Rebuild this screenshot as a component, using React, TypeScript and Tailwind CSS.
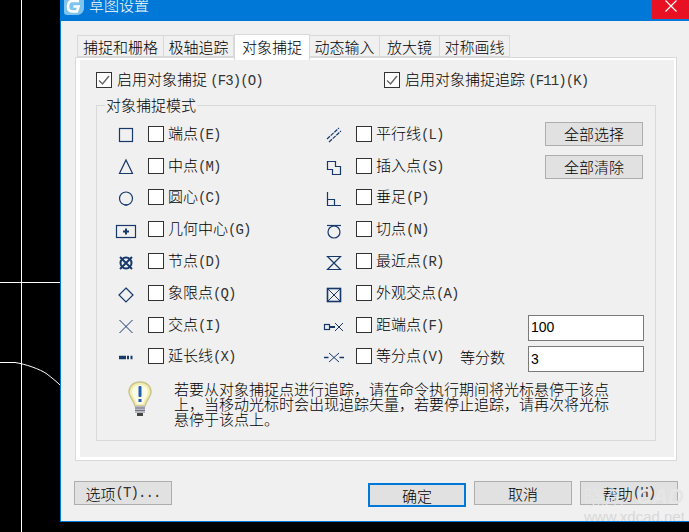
import React from 'react';

const cjk = "font-['Noto_Sans_CJK_SC','Liberation_Sans',sans-serif]";
const ICON = '#16386c';

// half-width latin part of a label, looks like the SimSun latin in the dialog
const Latin: React.FC<{ children: React.ReactNode }> = ({ children }) => (
    <span className="font-['Liberation_Mono',monospace] text-[14px] tracking-[-0.9px] text-[#333333]">{children}</span>
);

const Txt: React.FC<{ text: string }> = ({ text }) => {
    const m = text.match(/^([^(]*)(.*)$/);
    return (
        <span className="whitespace-nowrap">
            {m?.[1]}
            {m?.[2] && <Latin>{m[2]}</Latin>}
        </span>
    );
};

const Check: React.FC<{ checked?: boolean }> = ({ checked }) => (
    <span className="flex h-4 w-4 shrink-0 items-center justify-center border border-[#333333] bg-white">
        {checked && (
            <svg width="14" height="14" viewBox="0 0 14 14" fill="none">
                <path d="M2 7.5 L5.5 11 L12 3" stroke="#666666" strokeWidth="1.4" />
            </svg>
        )}
    </span>
);

const Glyph: React.FC<{ name: string }> = ({ name }) => {
    const shapes: Record<string, React.ReactNode> = {
        end: <rect x="3.5" y="3.5" width="13" height="13" strokeWidth="1.2" />,
        mid: <path d="M10 3 L16.5 16.5 H3.5 Z" strokeWidth="1.2" />,
        center: (
            <>
                <circle cx="10" cy="10.5" r="6.5" strokeWidth="1.2" />
                <path d="M8.5 17 H11.5" strokeWidth="1.4" />
            </>
        ),
        geo: (
            <>
                <rect x="0.5" y="5.5" width="19" height="12" strokeWidth="1.2" />
                <path d="M7 11.5 H13 M10 8.5 V14.5" strokeWidth="2" />
            </>
        ),
        node: (
            <>
                <circle cx="10" cy="11" r="5.5" strokeWidth="2" />
                <path d="M4 5 L16 17 M16 5 L4 17" strokeWidth="2" />
            </>
        ),
        quad: <path d="M10 4 L17 11 L10 18 L3 11 Z" strokeWidth="1.2" />,
        cross: <path d="M3.5 4 L16.5 17 M16.5 4 L3.5 17" />,
        ext: <path d="M3 10.5 H10 M11 10.5 H13 M14.5 10.5 H16.5" strokeWidth="3.5" />,
        par: <path d="M3 14 L15 3 M5 17 L17 6" strokeDasharray="4 1" strokeWidth="1.2" />,
        ins: <path d="M3.5 4.5 H11.5 V9.5 H16.5 V17.5 H8.5 V12.5 H3.5 Z" strokeWidth="1.2" />,
        perp: <path d="M3.5 4 V17.5 H17 M3.5 11.5 H10.5 V17.5" strokeWidth="1.2" />,
        tan: (
            <>
                <path d="M3 5.5 H17" strokeWidth="1.2" />
                <circle cx="10" cy="12" r="6" strokeWidth="1.2" />
            </>
        ),
        near: <path d="M3.5 4.5 H16.5 L3.5 17.5 H16.5 Z" strokeWidth="1.2" />,
        app: (
            <>
                <rect x="3.5" y="4.5" width="13" height="13" strokeWidth="1.6" />
                <path d="M3.5 4.5 L16.5 17.5 M16.5 4.5 L3.5 17.5" />
            </>
        ),
        dist: (
            <>
                <rect x="0.5" y="8.5" width="5" height="5" strokeWidth="1.2" />
                <path d="M5 11 H11" strokeWidth="2" />
                <path d="M11 7 L19 15 M19 7 L11 15" />
            </>
        ),
        div: (
            <>
                <path d="M0 10.5 H4.5 M15.5 10.5 H20" strokeWidth="1.6" />
                <path d="M5 6 L15 15 M15 6 L5 15" />
            </>
        ),
    };
    return (
        <svg width="20" height="20" viewBox="0 -1 20 20" fill="none" stroke={ICON} strokeWidth="1" className="overflow-visible">
            {shapes[name]}
        </svg>
    );
};

const Mode: React.FC<{ icon: string; text: string }> = ({ icon, text }) => (
    <div className="flex items-center">
        <span className="w-5 shrink-0">
            <Glyph name={icon} />
        </span>
        <span className="ml-3 mr-1">
            <Check />
        </span>
        <Txt text={text} />
    </div>
);

const Btn: React.FC<{ children: React.ReactNode; primary?: boolean; className?: string }> = ({ children, primary, className }) => (
    <button
        className={`flex h-6 w-[98px] items-center justify-center bg-[#e1e1e1] text-[15px] leading-none text-black ${
            primary ? 'border-2 border-[#0078d7]' : 'border border-[#adadad]'
        } ${className ?? ''}`}
    >
        {children}
    </button>
);

const tabs = [
    { label: '捕捉和栅格', w: 'w-[87px]' },
    { label: '极轴追踪', w: 'w-[70px]' },
    { label: '对象捕捉', w: 'w-[76px]', active: true },
    { label: '动态输入', w: 'w-[70px]' },
    { label: '放大镜', w: 'w-[60px]' },
    { label: '对称画线', w: 'w-[70px]' },
];

const Bulb = () => (
    <svg width="24" height="35" viewBox="0 0 24 35" className="shrink-0">
        <path d="M12 1 C5 1 1 5.5 1 11 C1 16.5 6 19 7 25 H17 C18 19 23 16.5 23 11 C23 5.5 19 1 12 1 Z" fill="#f3efb4" stroke="#c9c58c" strokeWidth="1.5" />
        <path d="M12 4 C7 4 4 7.5 4 11 C4 15 8 18 9 23 H15 C16 18 20 15 20 11 C20 7.5 17 4 12 4 Z" fill="#fbfbe6" />
        <rect x="10.5" y="5" width="3" height="11" rx="1" fill="#1f5fb5" />
        <rect x="10.5" y="18" width="3" height="3" fill="#1f5fb5" />
        <rect x="7" y="25" width="10" height="7" fill="#b9b9c4" />
        <path d="M7 27 H17 M7 29.5 H17" stroke="#77778a" />
        <rect x="9" y="32" width="6" height="3" fill="#444444" />
    </svg>
);

const AppLogo = () => (
    <svg width="20" height="15" viewBox="0 0 20 15">
        <path d="M3 -3 H20 V8 C20 12 17 15 13 15 H3 C1 15 0 14 0 12 V0 C0 -2 1 -3 3 -3 Z" fill="#7fc4ee" />
        <path d="M15 1 H8 C5 1 4 4 4 7 C4 10 6 11.5 9 11.5 H13 L14.5 6.5 H9.5" fill="none" stroke="#ffffff" strokeWidth="2.6" />
    </svg>
);

export default function App() {
    return (
        <div className={`relative flex h-[532px] w-[689px] items-start overflow-hidden bg-black text-[15px] font-light leading-[15px] text-black ${cjk}`}>
            {/* cad drawing behind the dialog */}
            <svg width="60" height="532" viewBox="0 0 60 532" className="shrink-0" fill="none" stroke="#ffffff">
                <path d="M21.5 0 V532 M0 282.5 H60" shapeRendering="crispEdges" />
                <path d="M0 362.5 H15 C25 364 40 369 47 374 C52 378 56 381 60 385" />
            </svg>

            {/* dialog */}
            <div className="h-[522px] w-[629px] shrink-0 border-b border-l border-[#0078d7] bg-[#f0f0f0]">
                <div className="flex h-[21px] items-start overflow-hidden bg-[#0078d7]">
                    <span className="ml-[3px]">
                        <AppLogo />
                    </span>
                    <span className="ml-[5px] -mt-[3px] text-[15px] leading-[15px] text-white">草图设置</span>
                    <span className="ml-auto flex h-[19px] w-[37px] items-center justify-center bg-[#e81123]">
                        <svg width="12" height="12" viewBox="0 0 12 12" stroke="#ffffff" strokeWidth="1.2" className="-mt-2">
                            <path d="M0.5 0.5 L11.5 11.5 M11.5 0.5 L0.5 11.5" />
                        </svg>
                    </span>
                </div>

                <div className="relative z-10 ml-4 mt-[13px] flex h-[23px] items-end">
                    {tabs.map((t) =>
                        t.active ? (
                            <div key={t.label} className={`${t.w} -mb-[3px] flex h-[26px] items-start justify-center border-x border-t border-[#d9d9d9] bg-white pt-[4px]`}>
                                {t.label}
                            </div>
                        ) : (
                            <div key={t.label} className={`${t.w} flex h-[22px] items-center justify-center border-y border-r border-[#d9d9d9] first:border-l`}>
                                {t.label}
                            </div>
                        ),
                    )}
                </div>

                {/* tab panel */}
                <div className="ml-[14px] h-[404px] w-[602px] border border-[#d9d9d9] bg-white pb-[3px] pl-1 pr-[2px] pt-[2px]">
                    <div className="h-full bg-[#f0f0f0] pl-4 pt-3">
                        <div className="flex h-4 items-center">
                            <div className="flex w-[288px] items-center gap-[5px]">
                                <Check checked />
                                <span className="whitespace-nowrap">
                                    启用对象捕捉 <Latin>(F3)(O)</Latin>
                                </span>
                            </div>
                            <div className="flex items-center gap-[5px]">
                                <Check checked />
                                <span className="whitespace-nowrap">
                                    启用对象捕捉追踪 <Latin>(F11)(K)</Latin>
                                </span>
                            </div>
                        </div>

                        <fieldset className="mt-[9px] h-[344px] w-[560px] border border-[#d9d9d9]">
                            <legend className="ml-2 h-4 px-px">对象捕捉模式</legend>

                            <div className="ml-[19px] mt-[5px] grid grid-cols-[208px_204px_1fr] auto-rows-[31.8px] items-center">
                                <Mode icon="end" text="端点(E)" />
                                <Mode icon="par" text="平行线(L)" />
                                <Btn className="ml-[17px]">全部选择</Btn>

                                <Mode icon="mid" text="中点(M)" />
                                <Mode icon="ins" text="插入点(S)" />
                                <Btn className="ml-[17px] mt-[2px]">全部清除</Btn>

                                <Mode icon="center" text="圆心(C)" />
                                <Mode icon="perp" text="垂足(P)" />
                                <div />

                                <Mode icon="geo" text="几何中心(G)" />
                                <Mode icon="tan" text="切点(N)" />
                                <div />

                                <Mode icon="node" text="节点(D)" />
                                <Mode icon="near" text="最近点(R)" />
                                <div />

                                <Mode icon="quad" text="象限点(Q)" />
                                <Mode icon="app" text="外观交点(A)" />
                                <div />

                                <Mode icon="cross" text="交点(I)" />
                                <Mode icon="dist" text="距端点(F)" />
                                <div className="mt-[6px] flex h-[26px] w-[116px] items-center border border-[#7a7a7a] bg-white pl-[2px] font-['Liberation_Sans',sans-serif] text-[14px]">100</div>

                                <Mode icon="ext" text="延长线(X)" />
                                <div className="flex items-center justify-between pr-[23px]">
                                    <Mode icon="div" text="等分点(V)" />
                                    <span>等分数</span>
                                </div>
                                <div className="mt-[6px] flex h-[26px] w-[116px] items-center border border-[#7a7a7a] bg-white pl-[2px] font-['Liberation_Sans',sans-serif] text-[14px]">3</div>
                            </div>

                            <div className="ml-[31px] mt-[9px] flex items-start">
                                <Bulb />
                                <p className="ml-[22px] w-[440px]">
                                    若要从对象捕捉点进行追踪，请在命令执行期间将光标悬停于该点上，当移动光标时会出现追踪矢量，若要停止追踪，请再次将光标悬停于该点上。
                                </p>
                            </div>
                        </fieldset>
                    </div>
                </div>

                {/* footer */}
                <div className="ml-[13px] mt-5 flex items-start">
                    <Btn>
                        选项<Latin>(T)...</Latin>
                    </Btn>
                    <Btn primary className="ml-[196px] mt-[2px]">确定</Btn>
                    <Btn className="ml-2">取消</Btn>
                    <Btn className="ml-2 text-[#222222]">
                        帮助<Latin>(H)</Latin>
                    </Btn>
                </div>
            </div>

            {/* site watermark */}
            <div className="pointer-events-none absolute left-[584px] top-[482px] h-[39px] w-[100px] overflow-hidden whitespace-nowrap font-['Liberation_Sans',sans-serif] text-[#d8d8d8]">
                <div className="flex h-[29px] items-center justify-between text-[#e6e6e6]">
                    <span className={`text-[20px] ${cjk}`}>晓东</span>
                    <span className="text-[22px] font-bold italic">CAD</span>
                </div>
                <div className="mt-[1px] text-[15px] leading-[9px]">www.xdcad.net</div>
            </div>
        </div>
    );
}
